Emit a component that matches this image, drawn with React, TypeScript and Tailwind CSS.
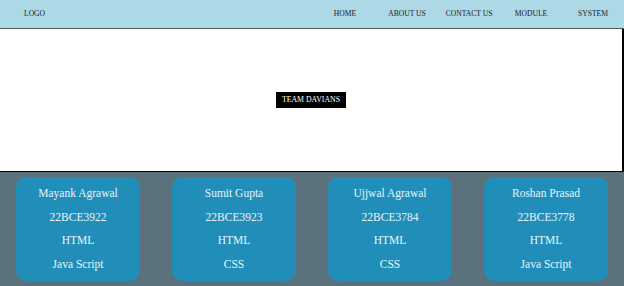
const NAV_ITEMS = ["HOME", "ABOUT US", "CONTACT US", "MODULE", "SYSTEM"];

type Member = {
  name: string;
  regNo: string;
  skills: string[];
};

const MEMBERS: Member[] = [
  { name: "Mayank Agrawal", regNo: "22BCE3922", skills: ["HTML", "Java Script"] },
  { name: "Sumit Gupta", regNo: "22BCE3923", skills: ["HTML", "CSS"] },
  { name: "Ujjwal Agrawal", regNo: "22BCE3784", skills: ["HTML", "CSS"] },
  { name: "Roshan Prasad", regNo: "22BCE3778", skills: ["HTML", "Java Script"] },
];

function Header() {
  return (
    <header className="flex h-[29px] items-center border-b border-[#4d5b60] bg-[#add8e6] text-[7.6px] text-[#222]">
      <div className="pl-6">LOGO</div>
      <nav className="ml-auto grid w-[310px] grid-cols-5">
        {NAV_ITEMS.map((item) => (
          <div key={item} className="text-center">
            {item}
          </div>
        ))}
      </nav>
    </header>
  );
}

function MemberCard({ member }: { member: Member }) {
  return (
    <div className="mx-4 flex h-[104px] flex-col items-center justify-center rounded-[10px] bg-[#218eba] py-[5px] text-[11.5px] leading-[23.5px] text-[#e8f4f8]">
      <div>{member.name}</div>
      <div>{member.regNo}</div>
      {member.skills.map((skill, i) => (
        <div key={i}>{skill}</div>
      ))}
    </div>
  );
}

export default function App() {
  return (
    <div
      className="min-h-[286px] bg-[#5b717b]"
      style={{ fontFamily: '"Liberation Serif", "Times New Roman", serif' }}
    >
      <Header />
      <section className="flex h-[143px] items-center justify-center border-r-2 border-b border-black bg-white">
        <div className="bg-black px-[6px] text-[7.8px] leading-[16px] text-white">
          TEAM DAVIANS
        </div>
      </section>
      <section className="grid grid-cols-4 pt-[5px] pb-[5px]">
        {MEMBERS.map((m) => (
          <MemberCard key={m.regNo} member={m} />
        ))}
      </section>
    </div>
  );
}
